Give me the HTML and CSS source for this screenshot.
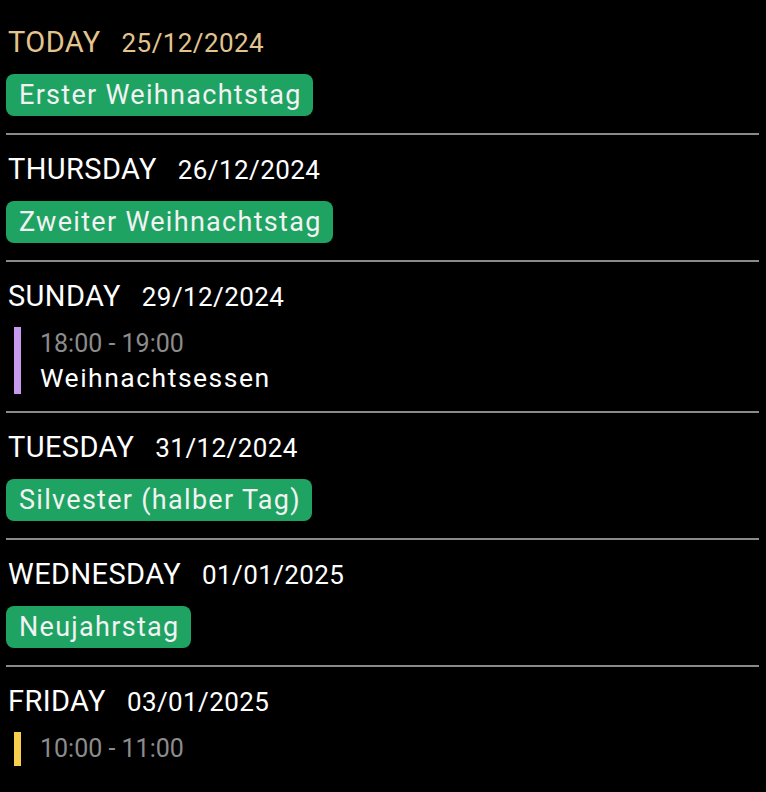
FILE: index.html
```html
<!DOCTYPE html>
<html lang="de">
<head>
    <meta charset="UTF-8">
    <title>Agenda</title>
    <link rel="stylesheet" href="styles.css">
</head>
<body>
  <div class="agenda">

    <section class="day">
        <div class="day-head today"><span class="day-name">TODAY</span><span class="day-date">25/12/2024</span></div>
        <div class="chip">Erster Weihnachtstag</div>
    </section>

    <section class="day">
        <div class="day-head"><span class="day-name">THURSDAY</span><span class="day-date">26/12/2024</span></div>
        <div class="chip">Zweiter Weihnachtstag</div>
    </section>

    <section class="day">
        <div class="day-head"><span class="day-name">SUNDAY</span><span class="day-date">29/12/2024</span></div>
        <div class="event purple">
            <div class="event-time">18:00 - 19:00</div>
            <div class="event-title">Weihnachtsessen</div>
        </div>
    </section>

    <section class="day">
        <div class="day-head"><span class="day-name">TUESDAY</span><span class="day-date">31/12/2024</span></div>
        <div class="chip">Silvester (halber Tag)</div>
    </section>

    <section class="day">
        <div class="day-head"><span class="day-name">WEDNESDAY</span><span class="day-date">01/01/2025</span></div>
        <div class="chip">Neujahrstag</div>
    </section>

    <section class="day last">
        <div class="day-head"><span class="day-name">FRIDAY</span><span class="day-date">03/01/2025</span></div>
        <div class="event yellow">
            <div class="event-time">10:00 - 11:00</div>
        </div>
    </section>

  </div>
</body>
</html>
```

FILE: styles.css
```css
html, body {
    margin: 0;
    background: #000;
    color: #fff;
    font-family: Roboto, "Liberation Sans", sans-serif;
}

.agenda {
    padding: 8px 6px 0 6px;
}

.day {
    padding: 19px 0 17px 0;
    border-bottom: 2px solid #8a8a8a;
    margin-right: 1px;
}

.day.last {
    border-bottom: none;
}

.day-head {
    padding-left: 2px;
    line-height: 31px;
    height: 32px;
    display: flex;
    align-items: baseline;
    gap: 21px;
}

.day-name {
    font-size: 29px;
    letter-spacing: 0.4px;
}

.day-date {
    font-size: 26px;
    letter-spacing: 0.4px;
}

.day-head.today {
    color: #e3c48f;
}

.chip {
    width: fit-content;
    margin-top: 15px;
    background: #1ea362;
    color: #f2f2f2;
    font-size: 27px;
    letter-spacing: 1.3px;
    line-height: 34px;
    padding: 4px 11px 4px 13px;
    border-radius: 8px;
}

.event {
    margin: 14px 0 0 8px;
    border-left: 7px solid #c79af0;
    padding-left: 19px;
    line-height: 33.5px;
}

.event.purple {
    border-left-color: #c79af0;
}

.event.yellow {
    border-left-color: #f6cf4d;
}

.event-time {
    color: #8c8c8c;
    font-size: 25px;
}

.event-title {
    color: #fff;
    font-size: 26.5px;
    letter-spacing: 1.5px;
}
```
